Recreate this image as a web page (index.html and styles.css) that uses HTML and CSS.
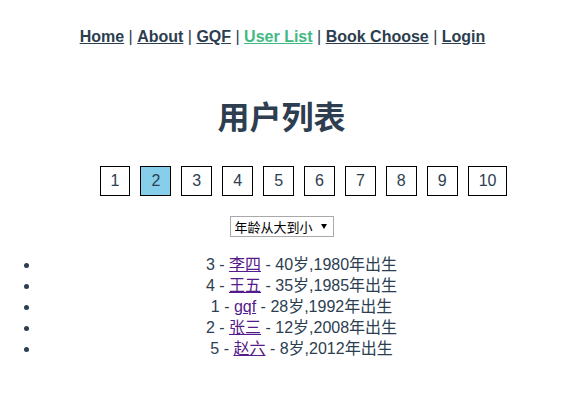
FILE: index.html
```html
<!DOCTYPE html>
<html lang="zh">
<head>
<meta charset="utf-8">
<title>用户列表</title>
<link rel="stylesheet" href="styles.css">
</head>
<body>
<div class="app">
  <nav class="nav">
    <a class="nav-link" href="#">Home</a> |
    <a class="nav-link" href="#">About</a> |
    <a class="nav-link" href="#">GQF</a> |
    <a class="nav-link active" href="#">User List</a> |
    <a class="nav-link" href="#">Book Choose</a> |
    <a class="nav-link" href="#">Login</a>
  </nav>
  <h1 class="title">用户列表</h1>
  <ul class="pager">
    <li class="page">1</li>
    <li class="page current">2</li>
    <li class="page">3</li>
    <li class="page">4</li>
    <li class="page">5</li>
    <li class="page">6</li>
    <li class="page">7</li>
    <li class="page">8</li>
    <li class="page">9</li>
    <li class="page">10</li>
  </ul>
  <div class="sort">
    <span class="select-wrap">
      <select class="select">
        <option>年龄从大到小</option>
        <option>年龄从小到大</option>
      </select>
      <span class="arrow"></span>
    </span>
  </div>
  <ul class="users">
    <li class="user">3 - <a class="user-link" href="#">李四</a> - 40岁,1980年出生</li>
    <li class="user">4 - <a class="user-link" href="#">王五</a> - 35岁,1985年出生</li>
    <li class="user">1 - <a class="user-link" href="#">gqf</a> - 28岁,1992年出生</li>
    <li class="user">2 - <a class="user-link" href="#">张三</a> - 12岁,2008年出生</li>
    <li class="user">5 - <a class="user-link" href="#">赵六</a> - 8岁,2012年出生</li>
  </ul>
</div>
</body>
</html>
```

FILE: styles.css
```css
html, body {
  margin: 0;
  padding: 0;
  background: #fff;
}
.app {
  font-family: "Liberation Sans", Arial, "Noto Sans CJK SC", sans-serif;
  font-size: 16px;
  text-align: center;
  color: #2c3e50;
}
.nav {
  padding: 28px 30px 30px 32px;
  line-height: 18px;
}
.nav-link {
  font-weight: bold;
  color: #2c3e50;
}
.nav-link.active {
  color: #42b983;
}
.title {
  margin: 26px 0 0;
  font-size: 32px;
  line-height: 32px;
  font-weight: bold;
  font-family: "Liberation Sans", "Noto Sans CJK SC", sans-serif;
}
.pager {
  display: flex;
  justify-content: center;
  gap: 10px;
  list-style: none;
  margin: 32px 0 0;
  padding: 0 0 0 44px;
}
.page {
  border: 1px solid #000;
  padding: 5px 10px;
  line-height: 18px;
  color: #2c3e50;
  background: #fff;
}
.page.current {
  background: #87ceeb;
}
.sort {
  margin-top: 20px;
  line-height: 21px;
}
.select-wrap {
  position: relative;
  display: inline-block;
  vertical-align: top;
}
.select {
  appearance: none;
  -webkit-appearance: none;
  width: 104px;
  height: 21px;
  box-sizing: border-box;
  border: 1px solid #a9a9a9;
  border-radius: 0;
  background: #fff;
  color: #000;
  font-family: "Noto Sans CJK SC", sans-serif;
  font-size: 13px;
  line-height: 19px;
  padding: 0 18px 0 4px;
  margin: 0;
  text-align: left;
  display: block;
}
.arrow {
  position: absolute;
  right: 7px;
  top: 8px;
  width: 0;
  height: 0;
  border-left: 3.5px solid transparent;
  border-right: 3.5px solid transparent;
  border-top: 5px solid #000;
  pointer-events: none;
}
.users {
  margin: 17px 0 0;
  padding-left: 40px;
}
.user {
  line-height: 21px;
}
.user-link {
  color: #551a8b;
}
```
